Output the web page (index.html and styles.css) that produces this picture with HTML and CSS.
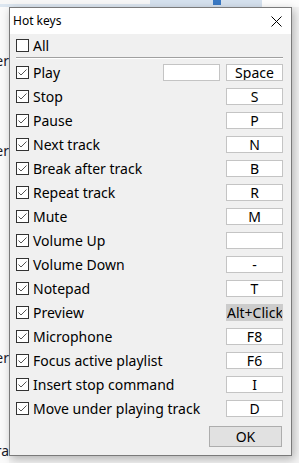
FILE: index.html
```html
<!DOCTYPE html>
<html lang="en">
<head>
  <meta charset="UTF-8" />
  <title>Hot keys</title>
  <link rel="stylesheet" href="styles.css">
</head>
<body>

  <div class="desk">
    <div class="topstrip">
      <div class="ts-left"></div>
      <div class="ts-mid"><span class="ts-icon"></span></div>
      <div class="ts-right"></div>
    </div>
    <div class="behind">
      <div class="frag f1"><span>Trimmer</span></div>
      <div class="frag f2"><span>Trimmer</span></div>
      <div class="frag f3"><span>Player</span></div>
      <div class="frag f4"><span>Extra</span></div>
    </div>
  </div>

  <div class="dialog">
    <div class="titlebar">
      <span class="title">Hot keys</span>
      <svg class="close" width="11" height="11" viewBox="0 0 11 11">
        <path d="M0.5 0.5 L10.5 10.5 M10.5 0.5 L0.5 10.5" stroke="#000" stroke-width="1" fill="none"/>
      </svg>
    </div>

    <div class="content">
      <div class="row all-row">
        <span class="cb"></span>
        <span class="label">All</span>
      </div>
      <div class="sep"></div>

      <div id="rows"></div>

      <div class="footer">
        <button class="ok">OK</button>
      </div>
    </div>
  </div>

<script>
  const keys = [
    ['Play', 'Space', true],
    ['Stop', 'S'],
    ['Pause', 'P'],
    ['Next track', 'N'],
    ['Break after track', 'B'],
    ['Repeat track', 'R'],
    ['Mute', 'M'],
    ['Volume Up', ''],
    ['Volume Down', '-'],
    ['Notepad', 'T'],
    ['Preview', 'Alt+Click', false, true],
    ['Microphone', 'F8'],
    ['Focus active playlist', 'F6'],
    ['Insert stop command', 'I'],
    ['Move under playing track', 'D']
  ];

  const check = '<svg width="13" height="13" viewBox="0 0 13 13"><path d="M2.5 6.5 L5 9 L10.5 3.5" stroke="#555" stroke-width="1" fill="none"/></svg>';

  let html = '';
  keys.forEach(function (k) {
    html += '<div class="row">' +
      '<span class="cb">' + check + '</span>' +
      '<span class="label">' + k[0] + '</span>' +
      (k[2] ? '<span class="key"></span>' : '') +
      '<span class="key' + (k[3] ? ' selected' : '') + '">' + k[1] + '</span>' +
      '</div>';
  });
  document.getElementById('rows').innerHTML = html;
</script>

</body>
</html>
```

FILE: styles.css
```css
body {
  margin: 0;
  width: 299px;
  height: 463px;
  overflow: hidden;
  position: relative;
  font-family: "Noto Sans", "Open Sans", sans-serif;
  background: #f4f4f4;
}

.desk {
  height: 100%;
  display: flex;
  flex-direction: column;
}

.topstrip {
  height: 7px;
  display: flex;
}

.ts-left {
  width: 150px;
  background: linear-gradient(#f7f7f7 0 4px, #dce6f0 4px);
}

.ts-mid {
  width: 112px;
  background: #d5e1ee;
  position: relative;
}

.ts-icon {
  position: absolute;
  left: 63px;
  top: 0;
  width: 8px;
  height: 5px;
  background: #3a79c4;
}

.ts-right {
  flex: 1;
  background: #fdfdfd;
}

.behind {
  flex: 1;
  width: 9px;
  background: #fafafa;
  display: flex;
  flex-direction: column;
}

.frag {
  display: flex;
  justify-content: flex-end;
  overflow: hidden;
  white-space: nowrap;
  font-size: 14px;
  line-height: 18px;
  color: #1a1a2a;
}

.f1 { margin-top: 45px; }
.f2 { margin-top: 72px; }
.f3 { margin-top: 189px; }
.f4 { margin-top: 75px; }

.dialog {
  position: absolute;
  left: 9px;
  top: 7px;
  width: 281px;
  height: 447px;
  border: 1px solid #7a7a7a;
  background: #f0f0f0;
  box-shadow: 2px 3px 9px rgba(0, 0, 0, 0.28);
  display: flex;
  flex-direction: column;
}

.titlebar {
  height: 26px;
  background: #fff;
  display: flex;
  align-items: center;
  justify-content: space-between;
  padding: 0 9px 0 3px;
  flex-shrink: 0;
}

.title {
  font-size: 12px;
  color: #000;
  position: relative;
  top: -1px;
}

.content {
  flex: 1;
  display: flex;
  flex-direction: column;
  padding: 0 8px 0 6px;
}

.row {
  height: 24px;
  display: flex;
  align-items: center;
  font-size: 14px;
  color: #000;
}

.all-row {
  height: 23px;
}

.cb {
  width: 13px;
  height: 13px;
  box-sizing: border-box;
  border: 1px solid #333;
  background: #fff;
  flex-shrink: 0;
  display: flex;
}

.cb svg {
  margin: -1px;
}

.label {
  margin-left: 4px;
  flex: 1;
  white-space: nowrap;
}

.sep {
  height: 1px;
  background: #a0a0a0;
  border-bottom: 1px solid #fff;
  margin-bottom: 1px;
}

.key {
  width: 57px;
  height: 17px;
  box-sizing: border-box;
  border: 1px solid #c4c4c4;
  background: #fff;
  margin-left: 6px;
  text-align: center;
  font-size: 14px;
  line-height: 15px;
  overflow: hidden;
  white-space: nowrap;
}

.key.selected {
  background: #cccccc;
  border-color: #cccccc;
}

.footer {
  display: flex;
  justify-content: flex-end;
  padding-top: 6px;
}

.ok {
  width: 73px;
  height: 21px;
  margin-right: 1px;
  border: 1px solid #adadad;
  background: #e1e1e1;
  font-family: inherit;
  font-size: 14px;
  line-height: 17px;
  padding: 0;
  color: #000;
}
```
